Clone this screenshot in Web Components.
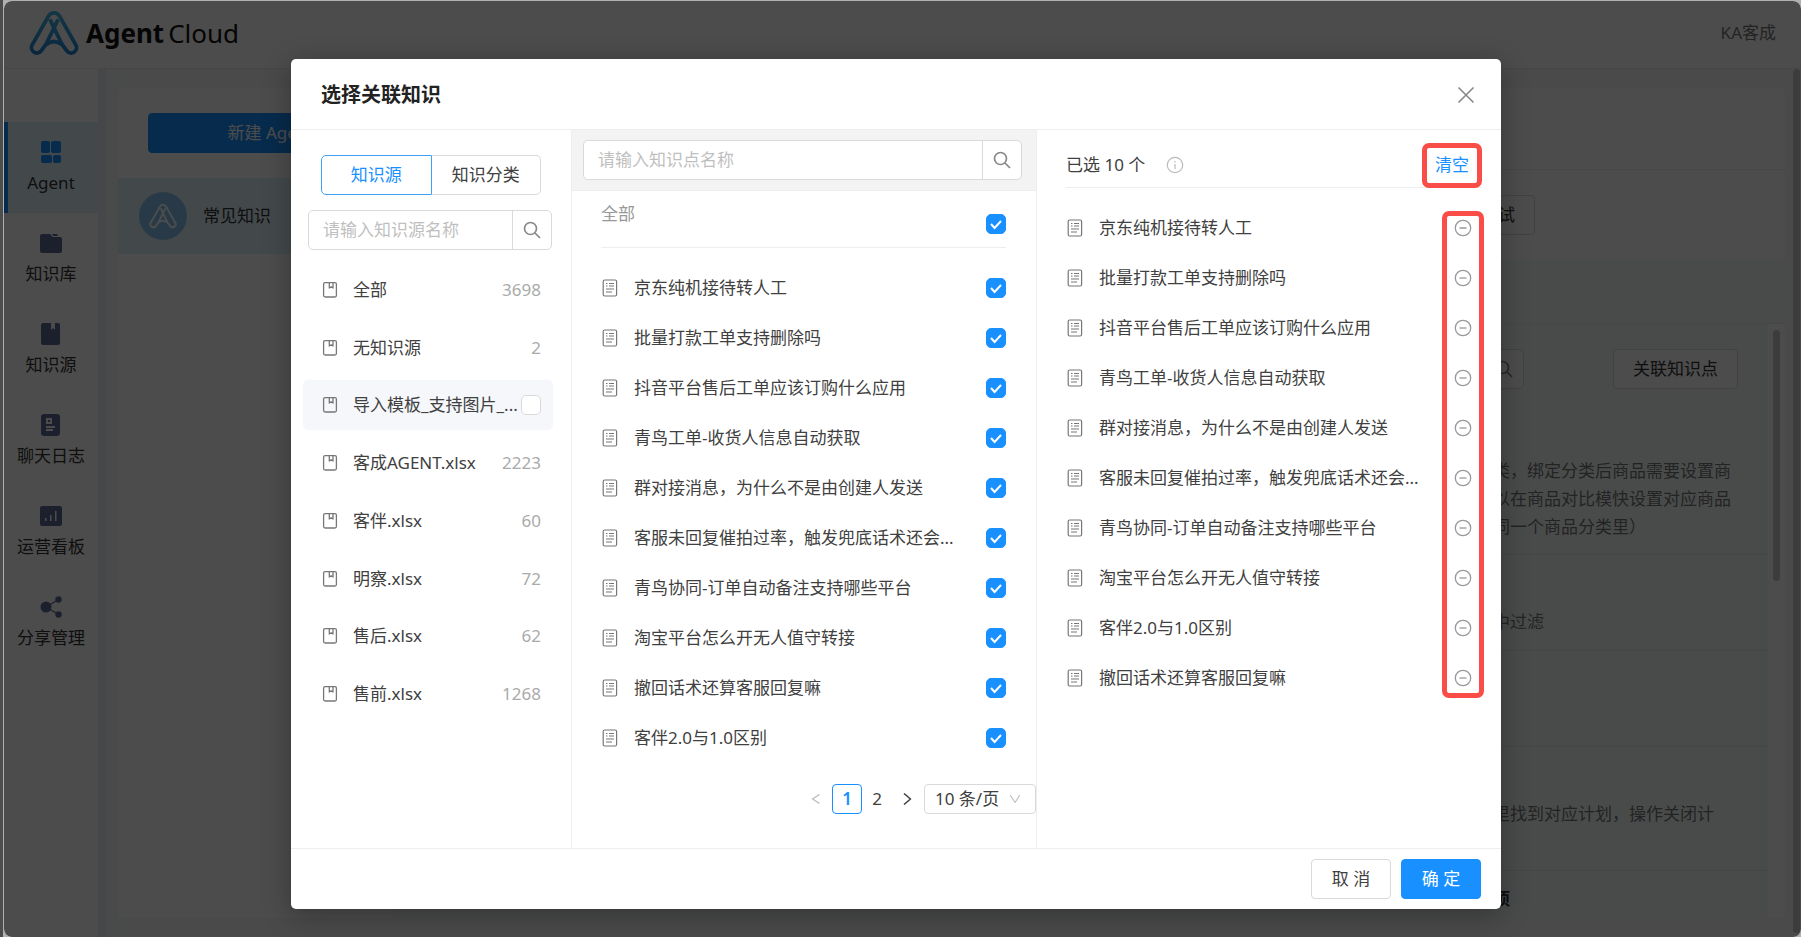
<!DOCTYPE html>
<html lang="zh-CN">
<head>
<meta charset="utf-8">
<title>AgentCloud</title>
<style>
  html, body { margin: 0; height: 100%; }
  body {
    background: #4d4d4d;
    font-family: "Noto Sans", "Noto Sans CJK SC", sans-serif;
    font-size: 17px;
    line-height: 24px;
    color: #333;
    overflow: hidden;
  }
</style>
</head>
<body>
<agent-app></agent-app>

<script>
const ICONS = {
  grid: ['0 0 22 22', '<rect x="1" y="0" width="9" height="12" rx="2"/><rect x="11" y="0" width="10" height="12" rx="2"/><rect x="1" y="14" width="11" height="8" rx="2"/><rect x="13" y="14" width="8" height="8" rx="2"/>', 'fill'],
  folder: ['0 0 22 22', '<path d="M2 2h8l3 3h7a2 2 0 0 1 2 2v12a2 2 0 0 1-2 2H2a2 2 0 0 1-2-2V4a2 2 0 0 1 2-2z"/><path d="M12 2h5l1 2h-4.500z"/>', 'fill'],
  book: ['0 0 22 22', '<path d="M3 0h8v7l2-2 2 2V0h3a2 2 0 0 1 2 2v18a2 2 0 0 1-2 2H3a2 2 0 0 1-2-2V2a2 2 0 0 1 2-2z"/>', 'fill'],
  log: ['0 0 22 22', '<path fill-rule="evenodd" d="M4 0h13a3 3 0 0 1 3 3v16a3 3 0 0 1-3 3H4a3 3 0 0 1-3-3V3a3 3 0 0 1 3-3zM6 4v6h6V4zM8 6h2v2H8zM6 12v2h9v-2zM6 15v2h7v-2z"/>', 'fill'],
  chart: ['0 0 22 22', '<path fill-rule="evenodd" d="M2 1h18a2 2 0 0 1 2 2v16a2 2 0 0 1-2 2H2a2 2 0 0 1-2-2V3a2 2 0 0 1 2-2zM5 13v3h1.500v-3zM10 10v6h1.500v-6zM15 6v10h1.500V6z"/>', 'fill'],
  share: ['0 0 22 22', '<circle cx="6" cy="11" r="5.500"/><circle cx="18.500" cy="3.500" r="3.200"/><circle cx="18.500" cy="18.500" r="3.200"/><path d="M6 11L18.500 3.500M6 11l12.500 7.500" stroke="currentColor" stroke-width="1.200"/>', 'fill'],
  search: ['0 0 18 18', '<circle cx="7.500" cy="7.500" r="6"/><path d="M12 12l5 5"/>', '1.7'],
  close: ['0 0 18 18', '<path d="M1.500 1.500l15 15M16.500 1.500l-15 15"/>', '1.6'],
  info: ['0 0 18 18', '<circle cx="9" cy="9" r="7.700"/><path d="M9 8v5M9 5v1.400"/>', '1.2'],
  minus: ['0 0 18 18', '<circle cx="9" cy="9" r="7.700"/><path d="M5.500 9h7"/>', '1.3'],
  source: ['0 0 18 18', '<rect x="2.600" y="1.600" width="12.800" height="14.400" rx="1.500"/><path d="M8.300 2v5l1.900-1.300L12 7V2"/>', '1.3'],
  doc: ['0 0 18 18', '<rect x="2.200" y="1" width="13.400" height="16" rx="1.500"/><path d="M5 4.500h1.500M8 4.500h5M5 7h1.500M8 7h5M5 10h8M5 13h6"/>', '1.2'],
  left: ['0 0 18 18', '<path d="M12.500 4.500L5.500 9l7 4.500"/>', '1.3'],
  right: ['0 0 18 18', '<path d="M6 3.500l6.500 5.500L6 14.500"/>', '1.6'],
  down: ['0 0 18 18', '<path d="M3.500 4.500L9 13l5.500-8.500"/>', '1.2'],
  logo: ['24 20 158 150', '<path d="M86 41L35 131a17 17 0 0 0 28 20L77 132Q103 112 129 132L143 151a17 17 0 0 0 28-20L120 41a20 20 0 0 0-34 0z"/><path d="M90 52L129 132M116 52L77 132"/>', '11'],
};
const icon = (name, size = 18) => {
  const [box, body, mode] = ICONS[name];
  const paint = mode === 'fill'
    ? 'fill="currentColor"'
    : `fill="none" stroke="currentColor" stroke-width="${mode}" stroke-linejoin="round"`;
  return `<svg viewBox="${box}" width="${size}" height="${size}" ${paint} aria-hidden="true">${body}</svg>`;
};

const BASE = `
  *, *::before { box-sizing: border-box; }
  svg { display: block; flex: none; }
  button, input, select { font: inherit; color: inherit; margin: 0; }
  button { padding: 0; border: 0; background: none; line-height: 24px; cursor: pointer; }
  ul, ol, p, h1, h2 { margin: 0; padding: 0; list-style: none; }
`;
class Base extends HTMLElement {
  constructor() {
    super();
    this.attachShadow({ mode: 'open' });
  }
  connectedCallback() {
    this.shadowRoot.innerHTML = `<style>${BASE}${this.styles()}</style>${this.markup()}`;
  }
}
const define = (name, styles, markup) => customElements.define(name, class extends Base {
  styles() { return styles; }
  markup() { return markup.call(this); }
});

define('ui-check', `
  :host { display: block; flex: none; width: 20px; height: 20px; }
  input {
    appearance: none; display: block; width: 20px; height: 20px;
    border: 1px solid #d9d9d9; border-radius: 5px; background: #fff;
  }
  input:checked {
    border-color: #1890ff;
    background: #1890ff url('data:image/svg+xml,<svg xmlns="http://www.w3.org/2000/svg" viewBox="0 0 18 18"><path d="M4 9l3.600 4L14 6" fill="none" stroke="white" stroke-width="2"/></svg>');
  }
`, function () {
  return `<input type="checkbox" aria-label="${this.getAttribute('label')}" ${this.hasAttribute('checked') ? 'checked' : ''}>`;
});

define('ui-search', `
  :host { display: block; }
  form { display: flex; height: 40px; border: 1px solid #d9d9d9; border-radius: 5px; background: #fff; overflow: hidden; }
  input { flex: 1; min-width: 0; padding: 0 14px; border: 0; background: none; outline: 0; }
  input::placeholder { color: #bfbfbf; opacity: 1; }
  button { display: grid; place-items: center; width: 39px; border-left: 1px solid #d9d9d9; color: #888; }
`, function () {
  const hint = this.getAttribute('hint') || '';
  return `<form><input type="text" placeholder="${hint}" aria-label="${hint || '搜索'}"><button type="button" aria-label="搜索">${icon('search')}</button></form>`;
});

define('ui-button', `
  :host { display: block; }
  button {
    width: 100%; height: 40px; padding: 0 19px; border: 1px solid #d9d9d9; border-radius: 4px;
    background: #fff; white-space: nowrap;
  }
  :host([primary]) button { background: #1890ff; border-color: #1890ff; color: #fff; }
`, () => `<button type="button"><slot></slot></button>`);

define('app-header', `
  :host { display: flex; align-items: center; height: 68px; padding: 0 25px 4px; border-bottom: 1px solid #eee; background: #fff; }
  .logo { width: 50px; margin-right: 7px; }
  h1 { flex: 1; font-size: 26px; line-height: 36px; font-weight: 700; color: #111; display: flex; gap: 4px; }
  h1 span { font-weight: 400; }
  .user { color: #777; }
`, () => `
  <div class="logo"><svg viewBox="24 20 158 150" width="50" height="48" fill="none" stroke="url(#g)" stroke-width="12" stroke-linejoin="round" aria-hidden="true">
    <defs><linearGradient id="g" x1="0" y1="20" x2="0" y2="170" gradientUnits="userSpaceOnUse"><stop offset="0" stop-color="#45b9e6"/><stop offset="1" stop-color="#1c7fd0"/></linearGradient></defs>${ICONS.logo[1]}</svg></div>
  <h1>Agent<span>Cloud</span></h1><div class="user">KA客成</div>`);

define('app-nav', `
  :host { display: block; width: 94px; padding-top: 53px; background: #fff; }
  a {
    display: flex; flex-direction: column; align-items: center; gap: 8px;
    height: 91px; padding-top: 19px; color: #333; text-decoration: none;
  }
  svg { color: #5f6d98; }
  .on { background: #e2f4fc; box-shadow: inset 4px 0 #1890ff; }
  .on svg { color: #1890ff; }
`, () => `<nav>${[['grid', 'Agent'], ['folder', '知识库'], ['book', '知识源'], ['log', '聊天日志'], ['chart', '运营看板'], ['share', '分享管理']]
  .map(([i, t], n) => `<a href="#" class="${n ? '' : 'on'}">${icon(i, 22)}${t}</a>`).join('')}</nav>`);

define('agent-list', `
  :host { display: block; width: 276px; padding-top: 25px; border-right: 1px solid #f0f0f0; background: #fff; border-radius: 5px 0 0 5px; }
  ui-button { margin: 0 0 25px 30px; }
  .item { display: flex; align-items: center; gap: 16px; height: 76px; padding-left: 21px; background: #e2f4fa; }
  .face { display: grid; place-items: center; width: 48px; height: 48px; border-radius: 50%; background: #85c4ee; color: #fff; }
`, () => `<ui-button primary>新建 Agent</ui-button><div class="item"><div class="face">${icon('logo', 28)}</div>常见知识</div>`);

define('agent-detail', `
  :host { display: flex; flex-direction: column; flex: 1; min-width: 0; background: #fff; border-radius: 0 5px 5px 0; overflow: hidden; }
  .title { height: 82px; border-bottom: 1px solid #eee; }
  .tools { height: 90px; padding: 25px 250px 0 0; display: flex; justify-content: flex-end; }
  .band { height: 64px; background: #f4fcfa; border-bottom: 1px solid #eee; }
  .area { flex: 1; display: flex; min-height: 0; }
  .list { flex: 1; background: #f4fcfa; overflow: hidden; }
  .bar { display: flex; justify-content: flex-end; gap: 89px; padding: 25px 30px 0 0; height: 121px; }
  ui-search { width: 240px; }
  .row { display: flex; align-items: center; justify-content: flex-end; height: 96px; padding-right: 33px; border-bottom: 1px solid #e8efed; color: #777; }
  .row p { width: 242px; line-height: 28px; white-space: nowrap; }
  .first { height: 110px; align-items: flex-start; padding-top: 12px; }
  .note { padding-top: 38px; }
  .tall { height: 124px; padding-top: 10px; }
  .last { font-weight: 700; height: 56px; color: #333; border: 0; }
  .thumb { width: 7px; height: 251px; margin: 6px 5px; border-radius: 4px; background: #c8c8c8; }
`, () => `
  <div class="title"></div>
  <div class="tools"><ui-button>测试</ui-button></div>
  <div class="band"></div>
  <div class="area"><div class="list">
    <div class="bar"><ui-search></ui-search><ui-button>关联知识点</ui-button></div>
    <div class="row first"><p>类，绑定分类后商品需要设置商<br>以在商品对比模快设置对应商品<br>同一个商品分类里）</p></div>
    <div class="row note"><p>中过滤</p></div>
    <div class="row"></div>
    <div class="row tall"><p>里找到对应计划，操作关闭计</p></div>
    <div class="row last"><p>项</p></div>
  </div><div class="thumb"></div></div>`);

define('source-panel', `
  :host { display: block; width: 281px; padding: 25px 18px 0 12px; border-right: 1px solid #eee; }
  .tabs { display: flex; margin: 0 12px 15px 18px; }
  .tabs button { flex: 1; height: 40px; border: 1px solid #d9d9d9; border-left: 0; border-radius: 0 5px 5px 0; }
  .tabs .on { border: 1px solid #40a0f5; border-radius: 5px 0 0 5px; color: #1890ff; }
  ui-search { margin: 0 1px 15px 5px; }
  ul { display: flex; flex-direction: column; justify-content: space-between; height: 454px; }
  li { display: flex; align-items: center; height: 50px; padding: 0 12px 0 18px; border-radius: 5px; }
  li.on { background: #f5f7fa; }
  svg { color: #777; margin-right: 14px; }
  .name { flex: 1; white-space: nowrap; }
  .num { color: #aaa; }
`, () => `
  <div class="tabs"><button type="button" class="on">知识源</button><button type="button">知识分类</button></div>
  <ui-search hint="请输入知识源名称"></ui-search>
  <ul>${[['全部', 3698], ['无知识源', 2], ['导入模板_支持图片_...', 0], ['客成AGENT.xlsx', 2223], ['客伴.xlsx', 60], ['明察.xlsx', 72], ['售后.xlsx', 62], ['售前.xlsx', 1268]]
    .map(([t, n]) => `<li class="${n ? '' : 'on'}">${icon('source')}<span class="name">${t}</span>${n ? `<span class="num">${n}</span>` : `<ui-check label="${t}"></ui-check>`}</li>`).join('')}</ul>`);

const POINTS = ['京东纯机接待转人工', '批量打款工单支持删除吗', '抖音平台售后工单应该订购什么应用', '青鸟工单-收货人信息自动获取', '群对接消息，为什么不是由创建人发送', '客服未回复催拍过率，触发兜底话术还会...', '青鸟协同-订单自动备注支持哪些平台', '淘宝平台怎么开无人值守转接', '撤回话术还算客服回复嘛', '客伴2.0与1.0区别'];
const ROWS = `
  li { display: flex; align-items: center; gap: 15px; height: 50px; }
  li > svg { color: #777; }
  .name { flex: 1; white-space: nowrap; }
`;

define('point-panel', `
  :host { display: flex; flex-direction: column; flex: 0 1 465px; min-width: 0; border-right: 1px solid #eee; }
  .top { height: 61px; padding: 10px 14px 0 11px; background: #f3f3f3; border-bottom: 1px solid #eee; }
  .all { display: flex; justify-content: space-between; height: 57px; margin: 0 30px 15px 29px; padding-top: 11px; border-bottom: 1px solid #eee; color: #999; }
  .all ui-check { margin-top: 12px; }
  ul { margin: 0 30px 0 29px; }
  ${ROWS}
  .pages { display: flex; align-items: center; justify-content: flex-end; height: 30px; margin-top: 21px; }
  .pages button { display: grid; place-items: center; width: 30px; height: 30px; border-radius: 4px; }
  .pages .prev { width: 32px; color: #bbb; }
  .pages .on { border: 1px solid #1890ff; color: #1890ff; font-weight: 600; }
  .size { display: grid; align-items: center; width: 112px; margin-left: 2px; }
  .size select, .size svg { grid-area: 1 / 1; }
  .size select { appearance: none; width: 112px; height: 30px; padding: 0 10px; border: 1px solid #d9d9d9; border-radius: 4px; background: #fff; }
  .size svg { justify-self: end; margin-right: 13px; color: #bbb; pointer-events: none; }
`, () => `
  <div class="top"><ui-search hint="请输入知识点名称"></ui-search></div>
  <div class="all">全部<ui-check label="全部" checked></ui-check></div>
  <ul>${POINTS.map(t => `<li>${icon('doc')}<span class="name">${t}</span><ui-check label="${t}" checked></ui-check></li>`).join('')}</ul>
  <div class="pages"><button type="button" class="prev" aria-label="上一页">${icon('left')}</button><button type="button" class="on">1</button><button type="button">2</button><button type="button" aria-label="下一页">${icon('right')}</button>
  <div class="size"><select aria-label="每页条数"><option>10 条/页</option></select>${icon('down', 16)}</div></div>`);

define('picked-panel', `
  :host { display: block; flex: 1; min-width: 0; padding: 0 19px 0 29px; }
  .top { display: flex; align-items: center; height: 58px; padding-top: 13px; border-bottom: 1px solid #eee; }
  .top svg { margin-left: 21px; color: #bbb; }
  .clear { width: 60px; height: 45px; margin-left: auto; border: 5px solid #fa4d48; border-radius: 7px; color: #1890ff; background: #fff; }
  .list { position: relative; padding: 15px 0; }
  .mark { position: absolute; top: 23px; bottom: 20px; right: -2px; width: 42px; border: 5px solid #fa4d48; border-radius: 7px; pointer-events: none; }
  ${ROWS}
  li { padding-right: 10px; }
  li button { color: #999; }
`, () => `
  <div class="top">已选 10 个${icon('info')}<button type="button" class="clear">清空</button></div>
  <div class="list"><ul>${[...POINTS.slice(0, 8), POINTS[9], POINTS[8]].map(t => `<li>${icon('doc')}<span class="name">${t}</span><button type="button" aria-label="移除">${icon('minus')}</button></li>`).join('')}</ul><div class="mark"></div></div>`);

define('ui-dialog', `
  :host { display: block; width: 1210px; max-width: 100%; background: #fff; color: #404040; border-radius: 5px; box-shadow: 0 6px 28px rgba(0,0,0,.3); }
  header { display: flex; align-items: center; justify-content: space-between; height: 71px; padding: 2px 26px 0 30px; border-bottom: 1px solid #eee; }
  h2 { font-size: 20px; line-height: 28px; font-weight: 700; color: #222; }
  header button { color: #888; }
  .body { display: flex; height: 719px; border-bottom: 1px solid #eee; }
  footer { display: flex; justify-content: flex-end; gap: 10px; padding: 10px 20px; }
  footer ui-button { width: 80px; }
`, () => `
  <header><h2>选择关联知识</h2><button type="button" aria-label="关闭">${icon('close')}</button></header>
  <div class="body"><slot></slot></div>
  <footer><ui-button>取 消</ui-button><ui-button primary>确 定</ui-button></footer>`);

define('agent-app', `
  :host { display: block; height: 100%; background: #4d4d4d; }
  .frame { display: flex; height: 100%; background: linear-gradient(90deg, #4d4d4d 3px, #b0b0b0 3px); }
  .app { position: relative; flex: 1; display: flex; flex-direction: column; margin: 1px 0 0 4px; border-radius: 8px; overflow: hidden; background: #f7f8f8; }
  .work { flex: 1; display: flex; min-height: 0; }
  main { flex: 1; display: flex; min-width: 0; padding: 19px 8px 19px 20px; background: linear-gradient(90deg, #eceef6 8px, #f5f9f8 8px, #f8f8f8 40px); }
  .scroll { width: 7px; margin: 0 1px 4px 0; border-radius: 4px; background: #c8c8c8; }
  .mask { position: absolute; inset: 0; display: flex; justify-content: center; align-items: flex-start; padding: 58px 13px 0 0; background: rgba(0,0,0,.7); }
`, () => `
  <div class="frame"><div class="app">
    <app-header></app-header>
    <div class="work"><app-nav></app-nav><main><agent-list></agent-list><agent-detail></agent-detail></main><div class="scroll"></div></div>
    <div class="mask"><ui-dialog role="dialog" aria-label="选择关联知识"><source-panel></source-panel><point-panel></point-panel><picked-panel></picked-panel></ui-dialog></div>
  </div></div>`);
</script>
</body>
</html>
